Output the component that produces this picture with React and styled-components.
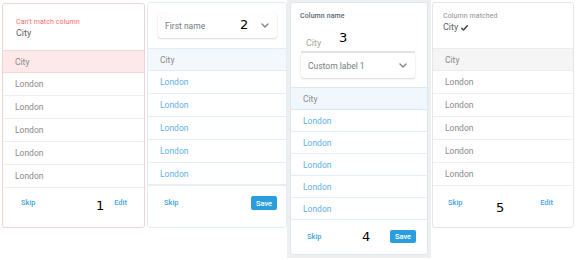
import React from "react";
import styled, { createGlobalStyle, css } from "styled-components";

const Global = createGlobalStyle`
  html, body { margin: 0; padding: 0; background: #ffffff; }
  body { font-family: Roboto, "Noto Sans", sans-serif; }
  * { box-sizing: border-box; }
`;

const tones = {
  error: { border: "#f6d3d3", headBg: "#fde9e9", headBorder: "#f6d6d6", cell: "#8a8a8a", line: "#f1eeee" },
  edit: { border: "#e3edf5", headBg: "#f3f8fc", headBorder: "#e1edf6", cell: "#5fb0e6", line: "#e6eff6" },
  active: { border: "#d9e8f2", headBg: "#f1f8fd", headBorder: "#dbeaf4", cell: "#5fb0e6", line: "#e3eef6" },
  matched: { border: "#e6e6e6", headBg: "#f5f5f5", headBorder: "#ececec", cell: "#8a8a8a", line: "#efefef" },
};

const Board = styled.div`
  position: relative;
  display: flex;
  align-items: flex-start;
  padding-left: 2px;
  width: 580px;
  height: 260px;
`;

const Frame = styled.div`
  background: #efefef;
  padding: 2px 3px 3px 3px;
  margin-left: ${(p) => p.$ml || 0}px;
`;

const Card = styled.div`
  display: flex;
  flex-direction: column;
  width: ${(p) => p.$w}px;
  margin-top: ${(p) => p.$mt || 0}px;
  margin-left: ${(p) => p.$ml || 0}px;
  background: #fff;
  border: 1px solid ${(p) => tones[p.$tone].border};
  border-radius: 3px;
  overflow: hidden;
`;

const Header = styled.div`
  height: ${(p) => p.$h}px;
  flex: none;
  display: flex;
  flex-direction: column;
  padding: ${(p) => p.$pad || "0"};
`;

const SmallLabel = styled.div`
  font-size: 7px;
  line-height: 10px;
  color: ${(p) => p.$color || "#888"};
  font-weight: ${(p) => p.$weight || 400};
  padding-left: ${(p) => p.$pl || 0}px;
  letter-spacing: 0.1px;
`;

const Spacer = styled.div`
  height: ${(p) => p.$h}px;
  flex: none;
`;

const Value = styled.div`
  display: flex;
  align-items: center;
  gap: 3px;
  font-size: 9px;
  line-height: 13px;
  color: #626262;
`;

const Check = styled.svg`
  width: 7px;
  height: 6px;
`;

const SelectBox = styled.div`
  display: flex;
  flex: none;
  align-items: center;
  justify-content: space-between;
  height: 25px;
  margin: ${(p) => p.$margin || "0"};
  padding: 0 8px 0 7px;
  background: #fff;
  border-radius: 3px;
  box-shadow: 0 1px 2px rgba(0, 0, 0, 0.14), 0 0 1px rgba(0, 0, 0, 0.12);
  font-size: 8.5px;
  color: #737b80;
`;

const Chevron = styled.svg`
  width: 8px;
  height: 5px;
`;

const InputLine = styled.div`
  height: 19px;
  flex: none;
  margin: 0 12px 0 10px;
  padding-left: 5px;
  display: flex;
  align-items: center;
  font-size: 9px;
  color: #a8a8a8;
  border-bottom: 2px solid #e4e4e4;
`;

const HeadRow = styled.div`
  height: 23px;
  flex: none;
  display: flex;
  align-items: center;
  padding-left: 12px;
  font-size: 8.5px;
  color: #8a8a8a;
  background: ${(p) => tones[p.$tone].headBg};
  border-top: 1px solid ${(p) => tones[p.$tone].headBorder};
  border-bottom: 1px solid ${(p) => tones[p.$tone].headBorder};
`;

const Row = styled.div`
  height: ${(p) => p.$h}px;
  flex: none;
  display: flex;
  align-items: center;
  padding-left: 12px;
  font-size: 8.5px;
  color: ${(p) => tones[p.$tone].cell};
  border-bottom: 1px solid ${(p) => tones[p.$tone].line};
  ${(p) =>
    p.$last &&
    css`
      border-bottom-width: 2px;
    `}
`;

const Footer = styled.div`
  height: ${(p) => p.$h}px;
  flex: none;
  display: flex;
  align-items: flex-start;
  justify-content: space-between;
  padding: ${(p) => p.$pad || "9px 17px 0 17px"};
`;

const LinkButton = styled.span`
  height: 14px;
  line-height: 14px;
  font-size: 7.5px;
  font-weight: 500;
  color: #45a6e0;
`;

const SaveButton = styled.span`
  height: ${(p) => p.$h || 14}px;
  width: 26px;
  display: flex;
  align-items: center;
  justify-content: center;
  border-radius: 2px;
  background: #2a9ddf;
  color: #fff;
  font-size: 7.5px;
  font-weight: 500;
`;

const Marker = styled.span`
  position: absolute;
  font-family: "DejaVu Sans", sans-serif;
  font-size: 13px;
  line-height: 13px;
  color: #000;
`;

const ChevronIcon = () => (
  <Chevron viewBox="0 0 8 5">
    <polyline points="1,1 4,4 7,1" fill="none" stroke="#7d858a" strokeWidth="1.4" strokeLinecap="round" strokeLinejoin="round" />
  </Chevron>
);

const Rows = ({ tone, h }) =>
  [0, 1, 2, 3, 4].map((i) => (
    <Row key={i} $tone={tone} $h={h} $last={i === 4 && tone === "edit"}>
      London
    </Row>
  ));

export default function App() {
  return (
    <Board>
      <Global />
      <Card $tone="error" $w={143} $mt={3}>
        <Header $h={46} $pad="13px 0 0 13px">
          <SmallLabel $color="#f06d6d">Can't match column</SmallLabel>
          <Value>City</Value>
        </Header>
        <HeadRow $tone="error">City</HeadRow>
        <Rows tone="error" h={23} />
        <Footer $h={39} $pad="8px 17px 0 18px">
          <LinkButton>Skip</LinkButton>
          <LinkButton>Edit</LinkButton>
        </Footer>
      </Card>

      <Card $tone="edit" $w={140} $mt={2} $ml={2}>
        <Header $h={45} $pad="10px 9px 0 10px">
          <SelectBox>
            First name
            <ChevronIcon />
          </SelectBox>
        </Header>
        <HeadRow $tone="edit">City</HeadRow>
        <Rows tone="edit" h={23} />
        <Footer $h={41} $pad="10px 9px 0 16px">
          <LinkButton>Skip</LinkButton>
          <SaveButton>Save</SaveButton>
        </Footer>
      </Card>

      <Frame>
        <Card $tone="active" $w={138}>
          <Header $h={84} $pad="8px 0 0 0">
            <SmallLabel $color="#5b6670" $weight={500} $pl={9}>
              Column name
            </SmallLabel>
            <Spacer $h={13} />
            <InputLine>City</InputLine>
            <SelectBox $margin="0 12px 0 10px">
              Custom label 1
              <ChevronIcon />
            </SelectBox>
          </Header>
          <HeadRow $tone="active">City</HeadRow>
          <Rows tone="active" h={22} />
          <Footer $h={34} $pad="10px 11px 0 16px">
            <LinkButton>Skip</LinkButton>
            <SaveButton $h={13}>Save</SaveButton>
          </Footer>
        </Card>
      </Frame>

      <Card $tone="matched" $w={142} $mt={2} $ml={1}>
        <Header $h={45} $pad="8px 0 0 10px">
          <SmallLabel $color="#8f8f8f">Column matched</SmallLabel>
          <Value>
            City
            <Check viewBox="0 0 7 6">
              <polyline points="0.8,3.2 2.6,5 6.3,0.8" fill="none" stroke="#444" strokeWidth="1.5" strokeLinecap="round" strokeLinejoin="round" />
            </Check>
          </Value>
        </Header>
        <HeadRow $tone="matched">City</HeadRow>
        <Rows tone="matched" h={23} />
        <Footer $h={41} $pad="10px 20px 0 15px">
          <LinkButton>Skip</LinkButton>
          <LinkButton>Edit</LinkButton>
        </Footer>
      </Card>

      <Marker style={{ left: 96, top: 199 }}>1</Marker>
      <Marker style={{ left: 240, top: 18 }}>2</Marker>
      <Marker style={{ left: 339, top: 31 }}>3</Marker>
      <Marker style={{ left: 362, top: 230 }}>4</Marker>
      <Marker style={{ left: 496, top: 201 }}>5</Marker>
    </Board>
  );
}
